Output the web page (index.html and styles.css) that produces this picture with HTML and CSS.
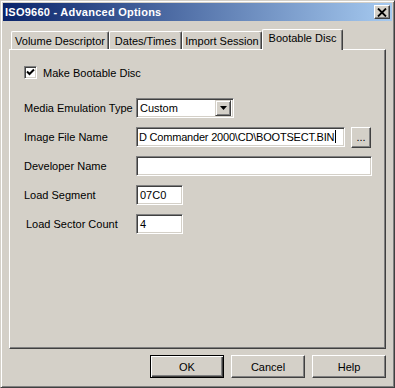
FILE: index.html
```html
<!DOCTYPE html>
<html lang="en">
<head>
  <meta charset="UTF-8" />
  <title>ISO9660 - Advanced Options</title>
  <link rel="stylesheet" href="styles.css">
</head>
<body>

  <div class="window">
    <div class="titlebar">
      <span class="title">ISO9660 - Advanced Options</span>
      <span class="close">
        <svg width="10" height="9" viewBox="0 0 10 9">
          <path d="M1 0.5 L9 8.5 M9 0.5 L1 8.5" stroke="#000" stroke-width="1.8" />
        </svg>
      </span>
    </div>

    <div class="tabs">
      <div class="tab t1">Volume Descriptor</div>
      <div class="tab t2">Dates/Times</div>
      <div class="tab t3">Import Session</div>
      <div class="tab t4 active">Bootable Disc</div>
    </div>

    <div class="panel">
      <div class="check-row">
        <span class="checkbox">
          <svg width="9" height="9" viewBox="0 0 9 9">
            <path d="M1 3.5 L3.5 6 L8 1.5" stroke="#000" stroke-width="2" fill="none" />
          </svg>
        </span>
        <span>Make Bootable Disc</span>
      </div>

      <div class="row">
        <label>Media Emulation Type</label>
        <div class="select">
          <span class="select-text">Custom</span>
          <span class="drop">
            <svg width="7" height="4" viewBox="0 0 7 4"><path d="M0 0 H7 L3.5 4 Z" fill="#000" /></svg>
          </span>
        </div>
      </div>

      <div class="row">
        <label>Image File Name</label>
        <div class="field wide">D Commander 2000\CD\BOOTSECT.BIN<span class="caret"></span></div>
        <button class="browse">...</button>
      </div>

      <div class="row">
        <label>Developer Name</label>
        <div class="field full"></div>
      </div>

      <div class="row">
        <label>Load Segment</label>
        <div class="field short">07C0</div>
      </div>

      <div class="row">
        <label class="nudge">Load Sector Count</label>
        <div class="field short">4</div>
      </div>
    </div>

    <div class="buttons">
      <button class="btn default">OK</button>
      <button class="btn">Cancel</button>
      <button class="btn">Help</button>
    </div>
  </div>

</body>
</html>
```

FILE: styles.css
```css
body {
  margin: 0;
  padding: 0;
  background-color: #d4d0c8;
  font-family: "Liberation Sans", Arial, sans-serif;
  font-size: 11px;
  color: #000;
}

.window {
  width: 395px;
  height: 388px;
  box-sizing: border-box;
  background-color: #d4d0c8;
  border: 1px solid;
  border-color: #d4d0c8 #404040 #404040 #d4d0c8;
  box-shadow: inset 1px 1px #fff, inset -1px -1px #808080;
  padding: 2px;
}

.titlebar {
  height: 18px;
  background: linear-gradient(to right, #0a246a, #a6caf0);
  display: flex;
  align-items: center;
  justify-content: space-between;
  padding: 0 2px 0 2px;
}

.title {
  color: #fff;
  font-weight: bold;
  font-size: 11px;
  letter-spacing: 0.25px;
}

.close {
  width: 16px;
  height: 14px;
  box-sizing: border-box;
  background-color: #d4d0c8;
  border: 1px solid;
  border-color: #fff #404040 #404040 #fff;
  box-shadow: inset -1px -1px #808080;
  display: flex;
  align-items: center;
  justify-content: center;
}

.tabs {
  display: flex;
  align-items: flex-end;
  margin: 8px 0 0 8px;
  height: 20px;
  position: relative;
  z-index: 1;
}

.tab {
  height: 18px;
  box-sizing: border-box;
  border: 1px solid;
  border-bottom: none;
  border-color: #fff #404040 #fff #fff;
  box-shadow: inset -1px 0 #808080;
  border-radius: 2px 2px 0 0;
  text-align: center;
  line-height: 18px;
  white-space: nowrap;
}

.t1 { width: 98px; }
.t2 { width: 73px; }
.t3 { width: 80px; }

.tab.active {
  width: 81px;
  height: 21px;
  margin-bottom: -1px;
  background-color: #d4d0c8;
  line-height: 17px;
}

.panel {
  margin: 0 6px;
  height: 300px;
  box-sizing: border-box;
  border: 1px solid;
  border-color: #fff #404040 #404040 #fff;
  box-shadow: inset -1px -1px #808080;
  padding: 16px 0 0 14px;
}

.check-row {
  display: flex;
  align-items: center;
  gap: 6px;
  height: 13px;
  margin-bottom: 19px;
}

.checkbox {
  width: 13px;
  height: 13px;
  box-sizing: border-box;
  background-color: #fff;
  border: 1px solid;
  border-color: #808080 #fff #fff #808080;
  box-shadow: inset 1px 1px #404040, inset -1px -1px #d4d0c8;
  display: flex;
  align-items: center;
  justify-content: center;
}

.row {
  display: flex;
  align-items: center;
  height: 20px;
  margin-bottom: 9px;
}

.row label {
  width: 112px;
  flex-shrink: 0;
  white-space: nowrap;
}

.row label.nudge {
  padding-left: 2px;
  width: 110px;
}

.field,
.select {
  height: 20px;
  box-sizing: border-box;
  background-color: #fff;
  border: 1px solid;
  border-color: #808080 #fff #fff #808080;
  box-shadow: inset 1px 1px #404040, inset -1px -1px #d4d0c8;
  padding: 0 3px;
  line-height: 18px;
  white-space: nowrap;
  overflow: hidden;
}

.field.wide {
  width: 209px;
  padding-left: 2px;
  letter-spacing: -0.2px;
}

.field.full { width: 236px; }
.field.short { width: 47px; }

.caret {
  display: inline-block;
  width: 1px;
  height: 13px;
  background-color: #000;
  vertical-align: -2px;
  margin-left: 1px;
}

.select {
  width: 98px;
  display: flex;
  align-items: center;
  justify-content: space-between;
  padding: 0 2px 0 3px;
}

.drop {
  width: 16px;
  height: 16px;
  box-sizing: border-box;
  background-color: #d4d0c8;
  border: 1px solid;
  border-color: #d4d0c8 #404040 #404040 #d4d0c8;
  box-shadow: inset 1px 1px #fff, inset -1px -1px #808080;
  display: flex;
  align-items: center;
  justify-content: center;
}

.browse {
  width: 20px;
  height: 21px;
  margin-left: 6px;
  padding: 0;
  font-family: "Liberation Sans", Arial, sans-serif;
  font-size: 11px;
  background-color: #d4d0c8;
  border: 1px solid;
  border-color: #fff #404040 #404040 #fff;
  box-shadow: inset -1px -1px #808080;
  line-height: 14px;
}

.buttons {
  display: flex;
  justify-content: flex-end;
  gap: 7px;
  margin: 6px 6px 0 0;
}

.btn {
  width: 74px;
  height: 23px;
  padding: 0;
  font-family: "Liberation Sans", Arial, sans-serif;
  font-size: 11px;
  background-color: #d4d0c8;
  border: 1px solid;
  border-color: #fff #404040 #404040 #fff;
  box-shadow: inset -1px -1px #808080;
}

.btn.default {
  border: 1px solid #000;
  box-shadow: inset 1px 1px #fff, inset -1px -1px #404040, inset -2px -2px #808080;
}
```
